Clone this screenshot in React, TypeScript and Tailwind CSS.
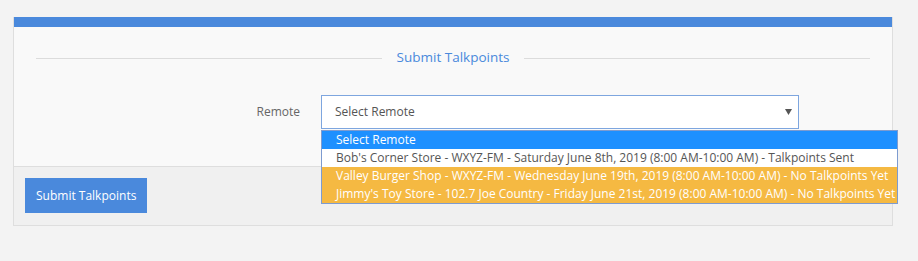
import React from "react";

const options = [
  { label: "Select Remote", tone: "selected" },
  {
    label:
      "Bob's Corner Store - WXYZ-FM - Saturday June 8th, 2019 (8:00 AM-10:00 AM) - Talkpoints Sent",
    tone: "plain",
  },
  {
    label:
      "Valley Burger Shop - WXYZ-FM - Wednesday June 19th, 2019 (8:00 AM-10:00 AM) - No Talkpoints Yet",
    tone: "pending",
  },
  {
    label:
      "Jimmy's Toy Store - 102.7 Joe Country - Friday June 21st, 2019 (8:00 AM-10:00 AM) - No Talkpoints Yet",
    tone: "pending",
  },
];

const App = () => {
  return (
    <div className="min-h-[261px] w-full bg-[#f3f3f3] pt-[17px] pl-[13px] font-['Open_Sans',sans-serif]">
      <div className="w-[880px] border border-t-0 border-[#dedede]">
        <div className="h-[10px] bg-[#4a89dc]" />

        {/* body */}
        <div className="bg-[#f9f9f9] px-[22px] pt-[20px] pb-[37px]">
          <div className="flex h-[22px] items-center gap-[15px]">
            <div className="h-px flex-1 bg-[#dcdcdc]" />
            <span className="text-[13.5px] leading-none text-[#4a89dc]">
              Submit Talkpoints
            </span>
            <div className="h-px flex-1 bg-[#dcdcdc]" />
          </div>

          <div className="mt-[26px] flex items-center">
            <label className="w-[264px] text-right text-[12px] text-[#666]">
              Remote
            </label>
            <div className="relative ml-[21px] w-[478px]">
              <div className="flex h-[34px] items-center justify-between border border-[#7ea6df] bg-white pl-[13px] pr-[6px] text-[12px] text-[#555]">
                <span>Select Remote</span>
                <svg width="7" height="6" viewBox="0 0 7 6">
                  <path d="M0 0h7L3.5 6z" fill="#555" />
                </svg>
              </div>

              {/* open option list */}
              <div className="absolute top-[35px] left-0 z-10 w-[577px] border border-[#7d9bd0] bg-white">
                {options.map((opt, i) => (
                  <div
                    key={i}
                    className={
                      "h-[18px] whitespace-nowrap pl-[14px] text-[12px] leading-[18px] " +
                      (opt.tone === "selected"
                        ? "bg-[#1e90ff] text-white"
                        : opt.tone === "pending"
                          ? "bg-[#f5b942] text-white"
                          : "bg-white text-[#555]")
                    }
                  >
                    {opt.label}
                  </div>
                ))}
              </div>
            </div>
          </div>
        </div>

        {/* footer */}
        <div className="border-t border-[#dedede] bg-[#f0f0f0] px-[11px] pt-[11px] pb-[12px]">
          <button className="h-[35px] bg-[#4a89dc] px-[11px] text-[12px] text-white">
            Submit Talkpoints
          </button>
        </div>
      </div>
    </div>
  );
};

export default App;
